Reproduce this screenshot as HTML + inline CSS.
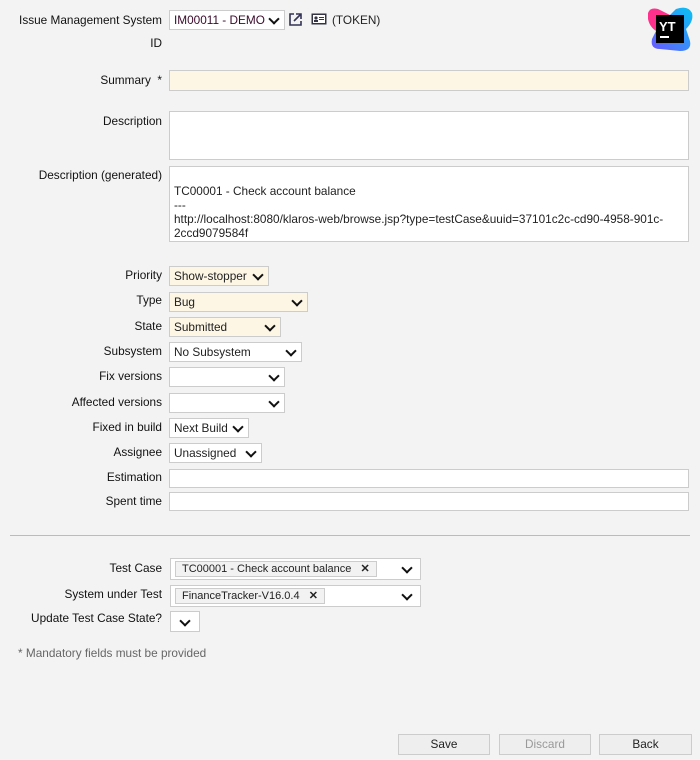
<!DOCTYPE html><html><head><style>
body{margin:0;width:700px;height:760px;background:#f3f3f3;font-family:"Liberation Sans",sans-serif;font-size:11.8px;color:#222;position:relative;overflow:hidden}
.a{position:absolute}
.l{position:absolute;right:538px;text-align:right;white-space:nowrap;color:#111}
.b{position:absolute;box-sizing:border-box;border:1px solid #ccc;background:#fff;padding:0 4px;line-height:19px;white-space:nowrap}
.y{background:#fdf6e5}
.c{position:absolute;right:6px;top:4px;width:6px;height:6px;border-right:2px solid #111;border-bottom:2px solid #111;transform:rotate(45deg)}
.tag{position:absolute;top:2px;left:4px;border:1px solid #ccc;background:#f2f2f2;padding:0 6px;line-height:14px;font-size:11px}
.btn{position:absolute;top:734px;width:92px;height:21px;box-sizing:border-box;border:1px solid #ccc;background:#eee;text-align:center;line-height:19px}
</style></head><body>
<div class="l" style="top:13px">Issue Management System</div>
<div class="l" style="top:36px">ID</div>
<div class="b" style="left:169px;top:10px;width:116px;height:20px;color:#3a0a2a">IM00011 - DEMO<span class="c"></span></div>
<svg class="a" style="left:288px;top:12px" width="15" height="15" viewBox="0 0 15 15"><path d="M6 2H2v11h11V9" fill="none" stroke="#335" stroke-width="1.6"/><path d="M8 2h5v5M13 2L6 9" fill="none" stroke="#335" stroke-width="1.6"/></svg>
<svg class="a" style="left:311px;top:13px" width="16" height="12"><rect x="0.5" y="0.5" width="15" height="11" fill="#334" /><rect x="2" y="2" width="12" height="8" fill="#fff"/><circle cx="5" cy="5" r="1.6" fill="#334"/><rect x="3" y="7" width="4" height="2" fill="#334"/><rect x="8" y="4" width="5" height="1" fill="#334"/><rect x="8" y="6" width="5" height="1" fill="#334"/></svg>
<div class="a" style="left:332px;top:13px;color:#222">(TOKEN)</div>
<svg class="a" style="left:646px;top:5px" width="48" height="48" viewBox="0 0 48 48"><defs><linearGradient id="g1" x1="0" y1="0" x2="1" y2="0"><stop offset="0" stop-color="#ff318c"/><stop offset="1" stop-color="#ff318c" stop-opacity="0"/></linearGradient><linearGradient id="g2" x1="0" y1="1" x2="1" y2="0"><stop offset="0" stop-color="#6b57ff"/><stop offset="1" stop-color="#07c3f2"/></linearGradient></defs><path d="M30 4Q42 0 46 8Q48 16 40 24L44 36Q46 46 34 46L14 44Q4 44 6 34L12 22Z" fill="url(#g2)"/><path d="M2 8Q4 2 12 4L28 12L14 28Q4 24 2 14Z" fill="#ff318c"/><rect x="10" y="10" width="28" height="28" fill="#000"/><text x="13" y="26" fill="#fff" font-size="13" font-weight="bold" font-family="Liberation Sans">YT</text><rect x="14" y="31" width="9" height="2" fill="#fff"/></svg>
<div class="l" style="top:73px">Summary &nbsp;*</div>
<div class="b y" style="left:169px;top:70px;width:520px;height:21px"></div>
<div class="l" style="top:114px">Description</div>
<div class="b" style="left:169px;top:111px;width:520px;height:49px"></div>
<div class="l" style="top:168px">Description (generated)</div>
<div class="b" style="left:169px;top:166px;width:520px;height:76px;white-space:normal;line-height:14px;padding-top:17px">TC00001 - Check account balance<br>---<br>http://localhost:8080/klaros-web/browse.jsp?type=testCase&amp;uuid=37101c2c-cd90-4958-901c-2ccd9079584f</div>
<div class="l" style="top:268px">Priority</div><div class="b y" style="left:169px;top:266px;width:100px;height:20px">Show-stopper<span class="c"></span></div>
<div class="l" style="top:293px">Type</div><div class="b y" style="left:169px;top:292px;width:139px;height:20px">Bug<span class="c"></span></div>
<div class="l" style="top:319px">State</div><div class="b y" style="left:169px;top:317px;width:112px;height:20px">Submitted<span class="c"></span></div>
<div class="l" style="top:344px">Subsystem</div><div class="b" style="left:169px;top:342px;width:133px;height:20px">No Subsystem<span class="c"></span></div>
<div class="l" style="top:369px">Fix versions</div><div class="b" style="left:169px;top:367px;width:116px;height:20px"><span class="c"></span></div>
<div class="l" style="top:395px">Affected versions</div><div class="b" style="left:169px;top:393px;width:116px;height:20px"><span class="c"></span></div>
<div class="l" style="top:420px">Fixed in build</div><div class="b" style="left:169px;top:418px;width:80px;height:20px">Next Build<span class="c"></span></div>
<div class="l" style="top:445px">Assignee</div><div class="b" style="left:169px;top:443px;width:93px;height:20px">Unassigned<span class="c"></span></div>
<div class="l" style="top:470px">Estimation</div><div class="b" style="left:169px;top:469px;width:520px;height:19px"></div>
<div class="l" style="top:494px">Spent time</div><div class="b" style="left:169px;top:492px;width:520px;height:19px"></div>
<div class="a" style="left:10px;top:535px;width:680px;border-top:1px solid #bbb"></div>
<div class="l" style="top:561px">Test Case</div><div class="b" style="left:170px;top:558px;width:251px;height:22px"><span class="tag">TC00001 - Check account balance &nbsp;&nbsp;<b>✕</b></span><span class="c" style="top:5px;right:9px"></span></div>
<div class="l" style="top:587px">System under Test</div><div class="b" style="left:170px;top:585px;width:251px;height:22px"><span class="tag">FinanceTracker-V16.0.4 &nbsp;&nbsp;<b>✕</b></span><span class="c" style="top:5px;right:9px"></span></div>
<div class="l" style="top:611px">Update Test Case State?</div><div class="b" style="left:170px;top:611px;width:30px;height:21px"><span class="c" style="top:5px;right:10px"></span></div>
<div class="a" style="left:18px;top:646px;color:#666">* Mandatory fields must be provided</div>
<div class="btn" style="left:398px">Save</div>
<div class="btn" style="left:499px;color:#999">Discard</div>
<div class="btn" style="left:599px;width:93px">Back</div>
</body></html>
